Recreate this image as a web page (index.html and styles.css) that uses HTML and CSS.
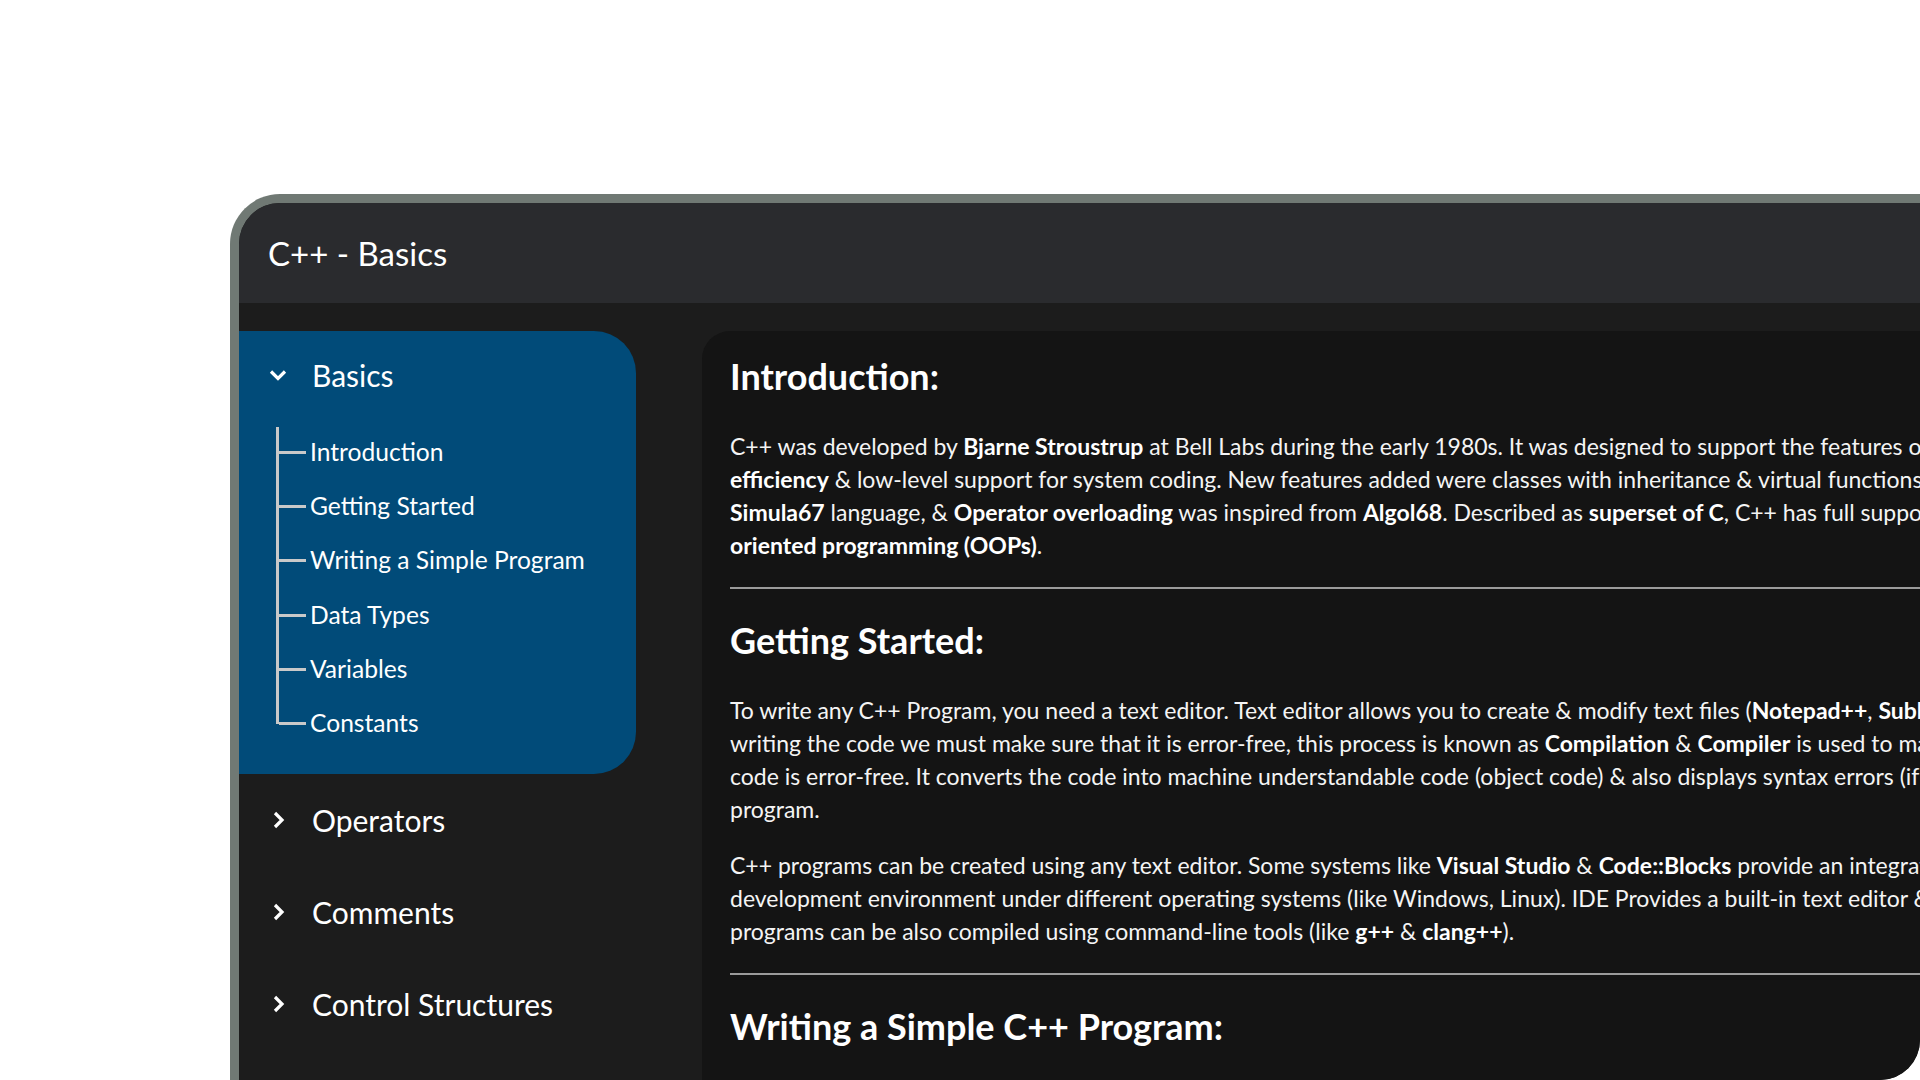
FILE: index.html
```html
<!DOCTYPE html>
<html lang="en">
<head>
<meta charset="utf-8">
<title>C++ - Basics</title>
<link rel="stylesheet" href="styles.css">
</head>
<body>
<div class="stage">
  <div class="window">
    <header class="titlebar">C++ - Basics</header>
    <div class="main">
      <nav class="sidebar">
        <div class="group open">
          <div class="group-head">
            <svg class="chev" viewBox="0 0 24 24" width="24" height="24"><polyline points="5,8.5 12,15.5 19,8.5"/></svg>
            <span>Basics</span>
          </div>
          <ul class="sublist">
            <li>Introduction</li>
            <li>Getting Started</li>
            <li>Writing a Simple Program</li>
            <li>Data Types</li>
            <li>Variables</li>
            <li>Constants</li>
          </ul>
        </div>
        <div class="group">
          <div class="group-head">
            <svg class="chev" viewBox="0 0 24 24" width="24" height="24"><polyline points="9,5 16,12 9,19"/></svg>
            <span>Operators</span>
          </div>
        </div>
        <div class="group">
          <div class="group-head">
            <svg class="chev" viewBox="0 0 24 24" width="24" height="24"><polyline points="9,5 16,12 9,19"/></svg>
            <span>Comments</span>
          </div>
        </div>
        <div class="group">
          <div class="group-head">
            <svg class="chev" viewBox="0 0 24 24" width="24" height="24"><polyline points="9,5 16,12 9,19"/></svg>
            <span>Control Structures</span>
          </div>
        </div>
      </nav>
      <main class="content">
        <section>
          <h2>Introduction:</h2>
          <p>C++ was developed by <b>Bjarne Stroustrup</b> at Bell Labs during the early 1980s. It was designed to support the features of C such as<br><b>efficiency</b> &amp; low-level support for system coding. New features added were classes with inheritance &amp; virtual functions, were borrowed from<br><b>Simula67</b> language, &amp; <b>Operator overloading</b> was inspired from <b>Algol68</b>. Described as <b>superset of C</b>, C++ has full support for <b>object-</b><br><b>oriented programming (OOPs)</b>.</p>
        </section>
        <hr>
        <section>
          <h2>Getting Started:</h2>
          <p>To write any C++ Program, you need a text editor. Text editor allows you to create &amp; modify text files (<b>Notepad++</b>, <b>Sublime Text</b>, etc.). After<br>writing the code we must make sure that it is error-free, this process is known as <b>Compilation</b> &amp; <b>Compiler</b> is used to make sure the<br>code is error-free. It converts the code into machine understandable code (object code) &amp; also displays syntax errors (if present) in the<br>program.</p>
          <p>C++ programs can be created using any text editor. Some systems like <b>Visual Studio</b> &amp; <b>Code::Blocks</b> provide an integrated<br>development environment under different operating systems (like Windows, Linux). IDE Provides a built-in text editor &amp; a compiler. C++<br>programs can be also compiled using command-line tools (like <b>g++</b> &amp; <b>clang++</b>).</p>
        </section>
        <hr>
        <section>
          <h2>Writing a Simple C++ Program:</h2>
        </section>
      </main>
    </div>
  </div>
</div>
</body>
</html>
```
FILE: styles.css
```css
html, body {
  margin: 0;
  height: 100%;
}
body {
  background: #ffffff;
  overflow: hidden;
  font-family: Lato, "Liberation Sans", sans-serif;
}
.stage {
  padding: 194px 0 0 230px;
}
.window {
  width: 1690px;
  height: 886px;
  box-sizing: border-box;
  border-top: 9px solid #707974;
  border-left: 9px solid #707974;
  border-radius: 50px 0 40px 0;
  overflow: hidden;
  background: #1c1c1c;
  display: flex;
  flex-direction: column;
}
.titlebar {
  flex: none;
  height: 100px;
  background: #2a2b2e;
  display: flex;
  align-items: center;
  padding-left: 29px;
  color: #ffffff;
  font-size: 33px;
}
.main {
  flex: 1;
  min-height: 0;
  display: flex;
  gap: 66px;
  padding-top: 28px;
}
.sidebar {
  flex: none;
  width: 397px;
  color: #ffffff;
}
.group {
  padding: 28px 0;
}
.group.open {
  background: #014b79;
  border-radius: 0 42px 42px 0;
  padding: 26px 0 24px;
}
.group-head {
  display: flex;
  align-items: center;
  gap: 22px;
  padding-left: 27px;
  font-size: 30px;
  line-height: 36px;
}
.chev {
  flex: none;
  fill: none;
  stroke: #ffffff;
  stroke-width: 3.2;
}
.sublist {
  list-style: none;
  margin: 32px 0 0 37px;
  padding: 0;
  position: relative;
}
.sublist::before {
  content: "";
  position: absolute;
  left: 0;
  top: 2px;
  bottom: 26px;
  width: 3px;
  background: #c9c9c9;
}
.sublist li {
  position: relative;
  height: 54.2px;
  line-height: 54px;
  padding-left: 34px;
  font-size: 24.6px;
}
.sublist li::before {
  content: "";
  position: absolute;
  left: 3px;
  top: 26px;
  width: 27px;
  height: 3px;
  background: #c9c9c9;
}
.content {
  flex: 1;
  min-width: 0;
  background: #141414;
  border-top-left-radius: 28px;
  padding: 25px 0 0 28px;
  color: #f4f4f4;
  white-space: nowrap;
  overflow: hidden;
}
.content h2 {
  font-size: 36px;
  line-height: 40px;
  font-weight: 700;
  margin: 0 0 34px;
  color: #ffffff;
}
.content p {
  font-size: 23px;
  line-height: 33px;
  margin: 0;
}
.content p + p {
  margin-top: 23px;
}
.content b {
  font-weight: 700;
  color: #ffffff;
}
.content hr {
  border: 0;
  border-top: 2px solid #9b9b9b;
  margin: 25px 0 31px;
  height: 0;
}
```
